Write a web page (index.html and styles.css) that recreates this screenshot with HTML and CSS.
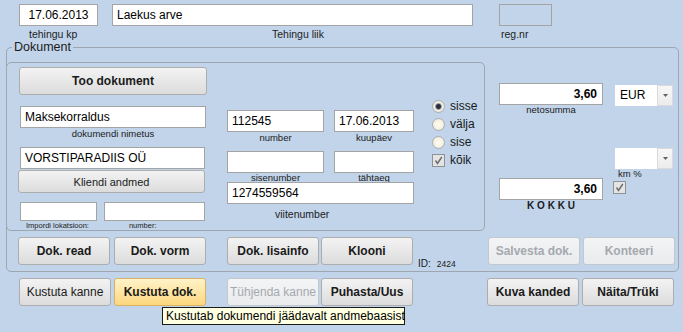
FILE: index.html
```html
<!DOCTYPE html>
<html lang="et">
<head>
<meta charset="utf-8">
<title>Kanne</title>
<link rel="stylesheet" href="styles.css">
</head>
<body>
<div class="head-row">
  <div class="fld fld-date">
    <div class="inp center">17.06.2013</div>
    <div class="lbl-top lt-date">tehingu kp</div>
  </div>
  <div class="fld fld-type">
    <div class="inp">Laekus arve</div>
    <div class="lbl-top lt-type">Tehingu liik</div>
  </div>
  <div class="fld fld-reg">
    <div class="inp inp-empty"></div>
    <div class="lbl-top lt-reg">reg.nr</div>
  </div>
</div>

<fieldset class="doc">
  <legend>Dokument</legend>
  <div class="doc-main">
    <div class="inner">
      <div class="col-a">
        <button type="button" class="btn btn-too">Too dokument</button>
        <div class="inp a-name">Maksekorraldus</div>
        <div class="lbl-s a-name-l">dokumendi nimetus</div>
        <div class="inp a-client">VORSTIPARADIIS OÜ</div>
        <button type="button" class="btn btn-normal btn-client">Kliendi andmed</button>
        <div class="a-small">
          <div class="inp inp-small s1"></div>
          <div class="inp inp-small s2"></div>
        </div>
        <div class="a-small-l">
          <span class="lbl-xs xs1">Impordi lokatsioon:</span>
          <span class="lbl-xs xs2">number:</span>
        </div>
      </div>

      <div class="col-b">
        <div class="b-row">
          <div class="inp w-num">112545</div>
          <div class="inp w-date">17.06.2013</div>
        </div>
        <div class="b-row">
          <div class="lbl-s w-num">number</div>
          <div class="lbl-s w-date">kuupäev</div>
        </div>
        <div class="b-row b-row2">
          <div class="inp w-num"></div>
          <div class="inp w-date"></div>
        </div>
        <div class="b-row">
          <div class="lbl-s lbl-tight w-num">sisenumber</div>
          <div class="lbl-s lbl-tight w-date">tähtaeg</div>
        </div>
        <div class="inp w-full">1274559564</div>
        <div class="lbl-m viite-l">viitenumber</div>
      </div>

      <div class="col-c">
        <div class="opt"><span class="radio on"></span><span>sisse</span></div>
        <div class="opt"><span class="radio"></span><span>välja</span></div>
        <div class="opt"><span class="radio"></span><span>sise</span></div>
        <div class="opt"><span class="check"><svg width="11" height="11" viewBox="0 0 11 11"><path d="M2.5 5.5 L4.5 8.5 L8.8 2" fill="none" stroke="#6a6a6a" stroke-width="1.4"/></svg></span><span>kõik</span></div>
      </div>
    </div>

    <div class="right">
      <div class="r-row">
        <div class="r-field">
          <div class="inp num">3,60</div>
          <div class="lbl-s center">netosumma</div>
        </div>
        <div class="sel sel-eur">
          <span class="sel-val">EUR</span>
          <span class="sel-btn"><svg width="5" height="3" viewBox="0 0 5 3"><path d="M0 0h5L2.5 3z" fill="#606060"/></svg></span>
        </div>
      </div>
      <div class="r-km">
        <div class="sel">
          <span class="sel-val"></span>
          <span class="sel-btn"><svg width="5" height="3" viewBox="0 0 5 3"><path d="M0 0h5L2.5 3z" fill="#606060"/></svg></span>
        </div>
        <div class="lbl-s km-l">km %</div>
      </div>
      <div class="r-row">
        <div class="r-field">
          <div class="inp num">3,60</div>
          <div class="kokku">K O K K U</div>
        </div>
        <span class="check check-r"><svg width="11" height="11" viewBox="0 0 11 11"><path d="M2.5 5.5 L4.5 8.5 L8.8 2" fill="none" stroke="#6a6a6a" stroke-width="1.4"/></svg></span>
      </div>
    </div>
  </div>

  <div class="actions">
    <button type="button" class="btn">Dok. read</button>
    <button type="button" class="btn g4">Dok. vorm</button>
    <button type="button" class="btn g21">Dok. lisainfo</button>
    <button type="button" class="btn g2">Klooni</button>
    <span class="doc-id"><span class="id-k">ID:</span><span class="id-v">2424</span></span>
    <button type="button" class="btn btn-off push">Salvesta dok.</button>
    <button type="button" class="btn btn-off g3">Konteeri</button>
  </div>
</fieldset>

<div class="actions bottom">
  <button type="button" class="btn btn-normal">Kustuta kanne</button>
  <button type="button" class="btn btn-hover g3">Kustuta dok.</button>
  <button type="button" class="btn btn-off btn-normal g21">Tühjenda kanne</button>
  <button type="button" class="btn g2">Puhasta/Uus</button>
  <button type="button" class="btn push">Kuva kanded</button>
  <button type="button" class="btn g3">Näita/Trüki</button>
</div>

<div class="tooltip">Kustutab dokumendi jäädavalt andmebaasist</div>
</body>
</html>
```

FILE: styles.css
```css
* { box-sizing: border-box; }
html, body { margin: 0; padding: 0; }
body {
  width: 683px;
  height: 332px;
  overflow: hidden;
  position: relative;
  background: #c1d4ea;
  font-family: "Liberation Sans", Arial, sans-serif;
  color: #1c1c1c;
}

/* buttons */
.btn {
  width: 92px;
  height: 28px;
  padding: 0;
  margin: 0;
  border: 1px solid #adadad;
  border-radius: 3px;
  background: linear-gradient(#f3f3f3, #dcdcdc);
  font-family: "Liberation Sans", Arial, sans-serif;
  font-size: 12px;
  font-weight: bold;
  color: #1a1a1a;
  white-space: nowrap;
  overflow: hidden;
}
.btn-normal { font-weight: normal; }
.btn-off {
  background: linear-gradient(#f3f4f5, #eaebec);
  border-color: #c3c8ce;
  color: #a4a9af;
}
.btn-hover {
  background: linear-gradient(#fff3c9, #fdd77f);
  border-color: #d9b266;
}
.g2 { margin-left: 2px; }
.g3 { margin-left: 3px; }
.g4 { margin-left: 4px; }
.g21 { margin-left: 21px; }
.push { margin-left: auto; }

/* generic input look */
.inp {
  height: 22px;
  background: #fff;
  border: 1px solid #a4a4a4;
  font-size: 12px;
  line-height: 20px;
  padding: 0 4px;
  color: #000;
  white-space: nowrap;
  overflow: hidden;
}
.inp.center { text-align: center; padding: 0; }
.inp-empty { background: transparent; }
.inp.num { text-align: right; font-weight: bold; padding-right: 5px; }
.center { text-align: center; }

/* header row */
.head-row { display: flex; padding-top: 4px; height: 40px; }
.fld-date { margin-left: 19px; width: 79px; }
.fld-type { margin-left: 14px; width: 361px; }
.fld-reg  { margin-left: 26px; width: 53px; }
.lbl-top {
  font-size: 10.5px;
  line-height: 12px;
  margin-top: 2px;
  white-space: nowrap;
  color: #1e1e1e;
}
.lt-date { padding-left: 10px; }
.lt-type { padding-left: 160px; }
.lt-reg  { padding-left: 2px; }

/* Dokument fieldset */
.doc {
  margin: 0 0 0 6px;
  width: 673px;
  min-width: 0;
  padding: 7px 3px 6px 0;
  border: 1px solid #9ea6b0;
  border-radius: 5px;
}
.doc legend {
  font-size: 12.5px;
  line-height: 15px;
  padding: 0 2px;
  margin-left: 5px;
  color: #1c1c1c;
}
.doc-main { display: flex; align-items: flex-start; height: 169px; }

.inner {
  margin-left: -1px;
  width: 479px;
  height: 169px;
  border: 1px solid #9ea6b0;
  border-radius: 5px;
  display: flex;
  align-items: flex-start;
  padding: 4px 0 0 11px;
}

/* column A */
.col-a { width: 189px; display: flex; flex-direction: column; }
.btn.btn-too { margin-left: 1px; width: 188px; height: 28px; }
.a-name { margin-top: 11px; margin-left: 2px; width: 186px; }
.a-name-l { margin-left: 2px; width: 186px; text-align: center; }
.a-client { margin-top: 7px; margin-left: 2px; width: 185px; }
.btn.btn-client { margin-top: 1px; width: 187px; height: 23px; font-size: 11px; }
.a-small { display: flex; margin-top: 9px; }
.inp-small { height: 19px; }
.s1 { margin-left: 2px; width: 77px; }
.s2 { margin-left: 7px; width: 101px; }
.a-small-l { display: flex; height: 9px; }
.lbl-xs { font-size: 7.5px; line-height: 9px; color: #222; white-space: nowrap; }
.xs1 { margin-left: 8px; }
.xs2 { margin-left: 40px; }

.lbl-s {
  font-size: 9.5px;
  line-height: 12px;
  color: #202020;
  white-space: nowrap;
  text-align: center;
}
.lbl-tight { line-height: 9px; height: 9px; }
.lbl-m { font-size: 10.5px; line-height: 12px; color: #202020; }

/* column B */
.col-b { margin-left: 20px; margin-top: 43px; width: 187px; display: flex; flex-direction: column; }
.b-row { display: flex; }
.b-row2 { margin-top: 7px; }
.w-num { width: 97px; }
.w-date { width: 80px; margin-left: 10px; }
.w-full { width: 187px; }
.viite-l { margin-top: 4px; padding-left: 48px; }

/* column C */
.col-c { margin-left: 18px; margin-top: 30px; display: flex; flex-direction: column; }
.opt { display: flex; align-items: center; gap: 5px; height: 18px; font-size: 12px; color: #1a1a1a; }
.radio {
  width: 13px;
  height: 13px;
  border-radius: 50%;
  border: 1px solid #a9afb6;
  background: radial-gradient(circle at 50% 50%, #fffef6 0, #f6f1e0 55%, #e2dac2 100%);
}
.radio.on {
  background: radial-gradient(circle at 50% 50%, #2a2f3a 0, #2a2f3a 2px, #9aa4b8 3px, #f6f1e0 4px, #e2dac2 100%);
}
.check {
  width: 13px;
  height: 13px;
  border: 1px solid #8e9296;
  background: #e4e4e4;
  display: flex;
  align-items: center;
  justify-content: center;
}

/* right panel */
.right { margin-left: 14px; margin-top: 21px; display: flex; flex-direction: column; }
.r-row { display: flex; align-items: flex-start; }
.r-field { width: 104px; }
.r-field .lbl-s { line-height: 10px; }
.sel {
  width: 58px;
  height: 21px;
  background: #fff;
  display: flex;
}
.sel-eur { margin-left: 12px; margin-top: 2px; }
.sel-val { flex: 1; font-size: 12px; line-height: 21px; padding-left: 5px; color: #000; }
.sel-btn {
  width: 16px;
  background: linear-gradient(#f7f7f7, #ececec);
  border: 1px solid #dadada;
  display: flex;
  align-items: center;
  justify-content: center;
}
.r-km { margin-top: 33px; margin-left: 116px; }
.km-l { text-align: left; padding-left: 3px; line-height: 9px; height: 9px; }
.kokku { font-size: 10px; font-weight: bold; line-height: 12px; text-align: center; color: #1a1a1a; }
.check-r { margin-left: 10px; margin-top: 3px; }

.actions { display: flex; margin-top: 6px; padding-left: 11px; }
.actions.bottom { padding-left: 19px; padding-right: 9px; }

.doc-id { align-self: flex-end; margin-left: 5px; margin-bottom: -5px; line-height: 12px; white-space: nowrap; }
.id-k { font-size: 10px; color: #1a1a1a; }
.id-v { font-size: 8.5px; margin-left: 6px; color: #1a1a1a; }

/* tooltip */
.tooltip {
  position: absolute;
  left: 162px;
  top: 307px;
  width: 243px;
  height: 18px;
  background: #ffffe1;
  border: 1px solid #1a1a1a;
  font-size: 12px;
  line-height: 16px;
  padding: 0 3px;
  color: #000;
  white-space: nowrap;
}
```
